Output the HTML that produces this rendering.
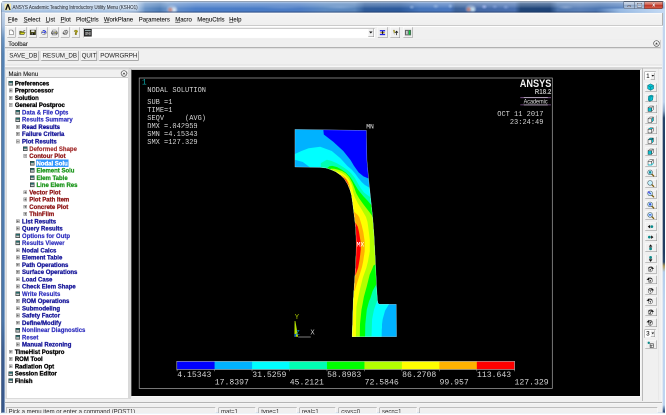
<!DOCTYPE html><html><head><meta charset="utf-8"><title>ANSYS</title><style>
html,body{margin:0;padding:0;background:#fff;overflow:hidden;width:666px;height:415px}
#w{position:absolute;left:0;top:0;width:1332px;height:830px;transform:scale(.5);will-change:transform;transform-origin:0 0;font-family:"Liberation Sans",sans-serif;font-size:12px;color:#000;overflow:hidden}
#w div,#w span.a,#w svg{position:absolute;box-sizing:border-box}
.t{white-space:nowrap;line-height:1;-webkit-text-stroke:.18px currentColor}
.m{font-family:"Liberation Mono",monospace;white-space:nowrap;line-height:1;color:#e8e8e8}
u{text-decoration:underline;text-underline-offset:1px}
.btn{background:#f0f0f0;border:1px solid;border-color:#fff #7a7a7a #7a7a7a #fff;box-shadow:0 0 0 1px #d9d9d9}
.tb{background:#f0f0f0;border:1px solid;border-color:#fff #8a8a8a #8a8a8a #fff}
.sunk{border:1px solid;border-color:#8c8c8c #fff #fff #8c8c8c;background:#f0f0f0}
.row{white-space:nowrap;line-height:1;font-weight:bold;font-size:12px;-webkit-text-stroke:.5px currentColor}
.c0{color:#000}.c1{color:#17179a}.c2{color:#8e1414}.c3{color:#1c961c}.c1d{color:#2b2bbe;-webkit-text-stroke-width:.3px}.c2d{color:#a22c2c;-webkit-text-stroke-width:.3px}
</style></head><body><div id="w">
<div style="left:2.4px;top:2.4px;width:1327.8px;height:837.6px;background:#bdd2ea;border:1px solid #5e6b7c;border-radius:6px 6px 0 0"></div>
<div style="left:3.2px;top:4px;width:5.9px;height:821px;background:linear-gradient(to right,rgba(255,255,255,.35) 0,rgba(255,255,255,0) 1.5px,rgba(255,255,255,0) 5.4px,rgba(255,255,255,.3) 100%),linear-gradient(to bottom,#c3d6ec 0,#bccfe6 26px,#a9c0dd 48px,#6a94c2 72px,#5482b4 104px,#4f7cae 400px,#4a75a8 640px,#3c5d90 700px,#38578a 100%)"></div>
<div style="left:1324.6px;top:4px;width:5px;height:821px;background:linear-gradient(to right,rgba(255,255,255,.5) 0,rgba(255,255,255,0) 1.6px),linear-gradient(to bottom,#c3d6ec 0,#c2d6f0 26px,#bfd3ee 200px,#8aa4c6 218px,#24426a 232px,#1f3a5f 300px,#1f3a5f 500px,#2a4669 520px,#b09a5a 528px,#b4cdec 540px,#bdd4f0 600px,#bdd4f0 806px,#5a7aa8 814px,#2f4f7c 819px,#2f4f7c 100%)"></div>
<div style="left:3.4px;top:3.4px;width:1325.8px;height:22.6px;background:linear-gradient(to bottom,rgba(222,233,246,.95) 0,rgba(222,233,246,.62) 1.6px,rgba(214,228,244,.36) 4px,rgba(214,228,244,.22) 9px,rgba(214,228,244,0) 14px,rgba(0,0,0,0) 19px,rgba(30,50,90,.55) 21.2px,rgba(40,60,100,.7) 22px,rgba(255,255,255,.9) 22.6px),radial-gradient(ellipse 6.4px 6.8px at 337.6px 16.6px,rgba(214,120,100,.75),rgba(255,255,255,0) 100%),radial-gradient(ellipse 6.8px 7.2px at 345.6px 16.6px,rgba(222,236,246,.9),rgba(255,255,255,0) 100%),radial-gradient(ellipse 13px 10px at 341.6px 15.6px,rgba(225,228,240,.75),rgba(255,255,255,0) 100%),radial-gradient(ellipse 6.4px 6.8px at 934.2px 15.8px,rgba(214,120,100,.75),rgba(255,255,255,0) 100%),radial-gradient(ellipse 6.8px 7.2px at 943px 15.8px,rgba(200,232,246,.9),rgba(255,255,255,0) 100%),radial-gradient(ellipse 13px 10px at 938.6px 14.6px,rgba(225,228,240,.75),rgba(255,255,255,0) 100%),radial-gradient(ellipse 6.4px 5.2px at 965.6px 10.6px,rgba(160,180,240,.85),rgba(255,255,255,0) 100%),radial-gradient(ellipse 6.4px 4.8px at 986.6px 10.6px,rgba(120,150,215,.7),rgba(255,255,255,0) 100%),radial-gradient(ellipse 6.4px 5.2px at 1008.6px 11.4px,rgba(130,160,220,.7),rgba(255,255,255,0) 100%),radial-gradient(ellipse 6px 4.8px at 820.6px 11.4px,rgba(140,175,225,.7),rgba(255,255,255,0) 100%),radial-gradient(ellipse 6.8px 5.2px at 868.6px 9.8px,rgba(140,175,225,.7),rgba(255,255,255,0) 100%),radial-gradient(ellipse 5.2px 5.2px at 897.6px 9.4px,rgba(150,185,230,.7),rgba(255,255,255,0) 100%),radial-gradient(ellipse 16px 4.8px at 1128.6px 11.6px,rgba(150,175,215,.6),rgba(255,255,255,0) 100%),radial-gradient(ellipse 32px 5.2px at 676.6px 11.6px,rgba(140,175,220,.5),rgba(255,255,255,0) 100%),radial-gradient(ellipse 40px 4.4px at 560.6px 12.6px,rgba(110,150,210,.45),rgba(255,255,255,0) 100%),linear-gradient(to right,#c6d8ee -3.4px,#c2d5ec 246.6px,#b4cbe6 268.6px,#6a94c8 286.6px,#4f7eb8 316.6px,#6f98cc 332.6px,#6590cc 348.6px,#4c7ec8 388.6px,#4a7cc6 516.6px,#4c7cc4 596.6px,#5c8ac2 646.6px,#5a86bc 706.6px,#305c9a 726.6px,#2c5a9c 796.6px,#4676bc 836.6px,#4a78c0 896.6px,#3c6299 908.6px,#456aa8 956.6px,#4a70b0 1026.6px,#214678 1038.6px,#1f4478 1096.6px,#5078b0 1112.6px,#5a80b8 1156.6px,#4a74b0 1196.6px,#5a84c0 1242.6px,#88a8d0 1326.6px);border-radius:5px 5px 0 0"></div>
<div style="left:3.4px;top:3.4px;width:288.6px;height:22px;background:linear-gradient(to bottom,#d6e4f3 0,#c4d7ed 6px,#b0c9e6 14px,#9fbde0 21px,#b8cce4 22px);border-radius:5px 0 0 0;-webkit-mask-image:linear-gradient(to right,#000 0,#000 84%,rgba(0,0,0,0) 100%);mask-image:linear-gradient(to right,#000 0,#000 84%,rgba(0,0,0,0) 100%)"></div>
<svg style="left:8.8px;top:6.6px" width="13.6" height="14.0" viewBox="0 0 14 14"><rect width="14" height="14" fill="#f3e9b0"/><path d="M1.2 13 L5.6 1 H8.4 L12.8 13 H9.6 L7 5.2 L4.4 13Z" fill="#111"/></svg>
<div class="t" style="left:25.2px;top:8.8px;font-size:10.8px;color:#262e3a;opacity:.92;transform:scaleX(.838);transform-origin:0 0;-webkit-text-stroke:.25px #262e3a;text-shadow:0 0 4px #fff,0 0 6px #fff,0 0 9px #fff">ANSYS Academic Teaching Introductory Utility Menu (KSHO1)</div>
<div style="left:1192px;top:17.2px;width:137.2px;height:8.6px;background:linear-gradient(to right,rgba(160,195,235,0) 0,rgba(165,198,236,.85) 36%,rgba(196,218,244,1) 100%)"></div>
<div style="left:1247.4px;top:3px;width:21.4px;height:14.6px;background:linear-gradient(#d4deec,#a9bcd6 45%,#8fa8c8 50%,#b4c6de);border:1px solid #4a5a70;border-radius:0 0 0 4px"></div>
<div style="left:1255px;top:11.2px;width:7px;height:2.8px;background:#f4f4f4;border:1px solid #556"></div>
<div style="left:1268.8px;top:3px;width:20px;height:14.6px;background:linear-gradient(#d4deec,#a9bcd6 45%,#8fa8c8 50%,#b4c6de);border:1px solid #4a5a70;border-left:none"></div>
<div style="left:1274.8px;top:7.2px;width:8.4px;height:6.4px;border:1.6px solid #f4f4f4;outline:1px solid #556"></div>
<div style="left:1288.8px;top:3px;width:36.8px;height:14.6px;background:linear-gradient(#e3a79a,#d0594a 45%,#c0372a 50%,#d6604a);border:1px solid #5a3030;border-left:none;border-radius:0 0 4px 0"></div>
<div class="t" style="left:1304.4px;top:3.8px;font-size:10.5px;font-weight:bold;color:#fff;text-shadow:0 0 2px #522">x</div>
<div style="left:9.6px;top:26px;width:1315px;height:799.2px;background:#f0f0f0"></div>
<div style="left:9.6px;top:26px;width:1315px;height:24.6px;background:linear-gradient(#fdfdfd 0,#f3f3f3 3px,#efefef 100%);border-bottom:1px solid #a6a6a6;border-right:1px solid #b0b0b0"></div>
<div class="t" style="left:16px;top:32.8px;font-size:12px;color:#101010"><u>F</u>ile</div>
<div class="t" style="left:47.2px;top:32.8px;font-size:12px;color:#101010"><u>S</u>elect</div>
<div class="t" style="left:91.4px;top:32.8px;font-size:12px;color:#101010"><u>L</u>ist</div>
<div class="t" style="left:121px;top:32.8px;font-size:12px;color:#101010"><u>P</u>lot</div>
<div class="t" style="left:152px;top:32.8px;font-size:12px;color:#101010">Plot<u>C</u>trls</div>
<div class="t" style="left:207.8px;top:32.8px;font-size:12px;color:#101010"><u>W</u>orkPlane</div>
<div class="t" style="left:277.6px;top:32.8px;font-size:12px;color:#101010">Pa<u>r</u>ameters</div>
<div class="t" style="left:350.4px;top:32.8px;font-size:12px;color:#101010"><u>M</u>acro</div>
<div class="t" style="left:394.4px;top:32.8px;font-size:12px;color:#101010">Me<u>n</u>uCtrls</div>
<div class="t" style="left:458.2px;top:32.8px;font-size:12px;color:#101010"><u>H</u>elp</div>
<div style="left:9.6px;top:51.6px;width:1315px;height:1px;background:#fff"></div>
<div class="tb" style="left:13.8px;top:54.4px;width:17.4px;height:20.8px;"></div>
<svg style="left:16.3px;top:59.2px" width="13.4" height="11.6" viewBox="0 0 16 16" preserveAspectRatio="none"><path d="M3.5 1.5H10L13 4.5V14.5H3.5Z" fill="#fff" stroke="#444" stroke-width="1.1"/><path d="M10 1.5V4.5H13" fill="none" stroke="#444" stroke-width="1"/></svg>
<div class="tb" style="left:35.3px;top:54.4px;width:17.4px;height:20.8px;"></div>
<svg style="left:37.8px;top:59.2px" width="13.4" height="11.6" viewBox="0 0 16 16" preserveAspectRatio="none"><path d="M1.5 13.5V4.5H5.5L7 6H12V13.5Z" fill="#8a8a00" stroke="#222" stroke-width="1"/><path d="M1.5 13.5L4.5 8H15L12 13.5Z" fill="#d8d820" stroke="#222" stroke-width="1"/><path d="M10 3.5c1.5-2 3.5-1.5 4 .5M14 4l.6-1.8M14 4l-1.8-.4" stroke="#222" fill="none"/></svg>
<div class="tb" style="left:56.8px;top:54.4px;width:17.4px;height:20.8px;"></div>
<svg style="left:59.3px;top:59.2px" width="13.4" height="11.6" viewBox="0 0 16 16" preserveAspectRatio="none"><rect x="1.5" y="1.5" width="13" height="13" fill="#4a4a10" stroke="#111"/><rect x="4" y="2" width="8" height="5" fill="#e8e8e8"/><rect x="4.5" y="9.5" width="7" height="5" fill="#1a1a1a"/><rect x="5.5" y="10.5" width="2" height="3" fill="#ddd"/></svg>
<div class="tb" style="left:78.3px;top:54.4px;width:17.4px;height:20.8px;"></div>
<svg style="left:80.8px;top:59.2px" width="13.4" height="11.6" viewBox="0 0 16 16" preserveAspectRatio="none"><ellipse cx="8" cy="8.5" rx="6" ry="5.5" fill="#b8bcc8" stroke="#444"/><path d="M6 3C12 2 14 7 9 9C7 10 5 9 4 8" fill="none" stroke="#2030e8" stroke-width="2.4"/><ellipse cx="6" cy="11" rx="2.5" ry="1.8" fill="#f4f4f4"/></svg>
<div class="tb" style="left:99.8px;top:54.4px;width:17.4px;height:20.8px;"></div>
<svg style="left:102.3px;top:59.2px" width="13.4" height="11.6" viewBox="0 0 16 16" preserveAspectRatio="none"><path d="M4 6.5V1.5H11.5L12.5 3V6.5" fill="#fff" stroke="#333" stroke-width="1"/><path d="M1 6.5H15V12.5H1Z" fill="#8c8c8c" stroke="#222" stroke-width="1"/><path d="M3 10.5H13V15H3Z" fill="#e4e4e4" stroke="#222" stroke-width="1"/><rect x="10" y="8" width="2.6" height="1.6" fill="#d8d000"/><path d="M2 8H8" stroke="#d0d0d0" stroke-width="1"/></svg>
<div class="tb" style="left:121.3px;top:54.4px;width:17.4px;height:20.8px;"></div>
<svg style="left:123.8px;top:59.2px" width="13.4" height="11.6" viewBox="0 0 16 16" preserveAspectRatio="none"><path d="M1.5 10L6 2.5L10.5 1.5L14.5 5L11 13.5L5 14.5Z" fill="#b4b4b4" stroke="#444" stroke-width="1"/><path d="M6 5L10 3.5L12 6L9 10L5.5 10.5Z" fill="#f0f0f0"/><circle cx="4.6" cy="10.6" r="1.5" fill="#222"/><circle cx="8.6" cy="7" r="1.4" fill="#222"/><circle cx="12" cy="9.6" r="1.3" fill="#333"/><circle cx="10.4" cy="3.4" r="1.1" fill="#555"/></svg>
<div class="tb" style="left:142.8px;top:54.4px;width:17.4px;height:20.8px;"></div>
<svg style="left:145.3px;top:59.2px" width="13.4" height="11.6" viewBox="0 0 16 16" preserveAspectRatio="none"><path d="M3.8 5.6C3.8 0.4 12.4 0.4 12.4 5.2C12.4 7.8 9.6 7.8 9.6 10.4H6.2C6.2 6.8 8.8 6.8 8.8 5.2C8.8 3.8 7.2 3.8 7.2 5.6Z" fill="#b0a400" stroke="#5a5000" stroke-width=".8"/><rect x="6.2" y="11.4" width="3.4" height="3.2" fill="#b0a400" stroke="#5a5000" stroke-width=".8"/></svg>
<div style="left:166.4px;top:55.6px;width:583.2px;height:20.8px;border:1px solid;border-color:#9a9a9a #fdfdfd #fdfdfd #9a9a9a;background:#fff"></div>
<div style="left:167.6px;top:56.6px;width:15.8px;height:17.2px;background:#f0f0f0"></div>
<svg style="left:168.2px;top:58.2px" width="15.4" height="15.2" viewBox="0 0 15 16" preserveAspectRatio="none"><rect x=".5" y=".5" width="14" height="15" fill="#2e2e2e" stroke="#111"/><rect x="2" y="2" width="11" height="2.2" fill="#9aa"/><path d="M2.5 7H8M2.5 9.5H11M2.5 12H7" stroke="#ccc" stroke-width="1.2"/><rect x="9" y="6" width="4" height="7" fill="#888"/></svg>
<div class="tb" style="left:736.4px;top:57px;width:11.2px;height:17.4px;"></div>
<svg style="left:738.4px;top:62.4px" width="7.2" height="6" viewBox="0 0 7 6"><path d="M0 1H7L3.5 5Z" fill="#111"/></svg>
<div class="tb" style="left:755px;top:54px;width:19.8px;height:21.6px;"></div>
<svg style="left:758.4px;top:58.6px" width="14" height="12.4" viewBox="0 0 16 16" preserveAspectRatio="none"><rect x="2" y="1.5" width="12" height="3.4" fill="#2424e0"/><rect x="2" y="11.2" width="12" height="3.4" fill="#2424e0"/><rect x="6.6" y="4.5" width="2.8" height="7" fill="#111"/><rect x="3" y="6.5" width="10" height="3" fill="#b89a30"/><rect x="6.6" y="6.5" width="2.8" height="3" fill="#111"/></svg>
<div class="tb" style="left:780.4px;top:54px;width:19.8px;height:21.6px;"></div>
<svg style="left:783.8px;top:58.6px" width="14" height="12.4" viewBox="0 0 16 16" preserveAspectRatio="none"><path d="M2.6 1.6L5.8 1.6L7.2 8L4.6 9Z" fill="#dcc828" stroke="#665" stroke-width=".8"/><path d="M10.6 14.5V5M7.6 8.4L10.6 4.4L13.6 8.4" fill="none" stroke="#111" stroke-width="1.7"/><path d="M4 9l2 4" stroke="#887" /></svg>
<div class="tb" style="left:805.6px;top:54px;width:19.8px;height:21.6px;"></div>
<svg style="left:809px;top:58.6px" width="14" height="12.4" viewBox="0 0 16 16" preserveAspectRatio="none"><rect x="1.5" y="1.5" width="13" height="13" fill="#9a9a9a" stroke="#444"/><rect x="3" y="3" width="5" height="10" fill="#c8ccd0" stroke="#555"/><rect x="10" y="2.5" width="3.4" height="11" fill="#10c840" stroke="#0a6a2a" stroke-width=".6"/></svg>
<div style="left:9.6px;top:77.8px;width:1314.4px;height:1.2px;background:#ececec"></div>
<div class="t" style="left:16.4px;top:81.8px;font-size:12px;color:#101010">Toolbar</div>
<div style="left:9.6px;top:94.4px;width:1311.6px;height:2.8px;background:linear-gradient(#c6c6c6,#a8a8a8 50%,#e4e4e4)"></div>
<div style="left:1319.6px;top:80px;width:1.4px;height:16.8px;background:#b0b0b0"></div>
<svg style="left:1306.2px;top:80.4px" width="14" height="14" viewBox="0 0 14 14"><circle cx="7" cy="7" r="5.7" fill="#f6f6f6" stroke="#505050" stroke-width="1.3"/><path d="M4.2 9.6L7 5L9.8 9.6" fill="none" stroke="#7a7a7a" stroke-width="1"/><circle cx="7" cy="7.5" r="1.5" fill="#3a3a3a"/></svg>
<div class="btn" style="left:14.8px;top:101.6px;width:63.6px;height:19.8px;"></div>
<div class="t" style="left:14.8px;top:105px;width:63.6px;text-align:center;font-size:12.4px;color:#1c1c1c;-webkit-text-stroke:0">SAVE_DB</div>
<div class="btn" style="left:82.4px;top:101.6px;width:74.4px;height:19.8px;"></div>
<div class="t" style="left:82.4px;top:105px;width:74.4px;text-align:center;font-size:12.4px;color:#1c1c1c;-webkit-text-stroke:0">RESUM_DB</div>
<div class="btn" style="left:161.6px;top:101.6px;width:32.8px;height:19.8px;"></div>
<div class="t" style="left:161.6px;top:105px;width:32.8px;text-align:center;font-size:12.4px;color:#1c1c1c;-webkit-text-stroke:0">QUIT</div>
<div class="btn" style="left:198.4px;top:101.6px;width:78.4px;height:19.8px;"></div>
<div class="t" style="left:198.4px;top:105px;width:78.4px;text-align:center;font-size:12.4px;color:#1c1c1c;-webkit-text-stroke:0">POWRGRPH</div>
<div style="left:9.6px;top:129.2px;width:1314.4px;height:1.4px;background:#e2e2e2"></div>
<div style="left:9.6px;top:130.6px;width:1314.4px;height:4.2px;background:linear-gradient(#f3f3f3,#fbfbfb 50%,#efefef)"></div>
<div style="left:9.6px;top:134.8px;width:1314.4px;height:2.6px;background:linear-gradient(#c9c9c9,#b2b2b2 50%,#c4c4c4)"></div>
<div style="left:10.6px;top:138px;width:246.2px;height:660px;border:1px solid #d4d4d4;border-right-color:#c2c2c2;background:#f0f0f0"></div>
<div class="t" style="left:17px;top:142.2px;font-size:12px;color:#101010">Main Menu</div>
<svg style="left:241.4px;top:140px" width="14" height="14" viewBox="0 0 14 14"><circle cx="7" cy="7" r="5.7" fill="#f6f6f6" stroke="#505050" stroke-width="1.3"/><path d="M4.2 9.6L7 5L9.8 9.6" fill="none" stroke="#7a7a7a" stroke-width="1"/><circle cx="7" cy="7.5" r="1.5" fill="#3a3a3a"/></svg>
<div style="left:12.4px;top:155.4px;width:243.6px;height:642px;background:#fff;border:1px solid;border-color:#a8a8a8 #e0e0e0 #e0e0e0 #b8b8b8"></div>
<div style="left:259.2px;top:137px;width:1.6px;height:661px;background:#c4c4c4"></div>
<svg style="left:16.9px;top:162.2px" width="9.2" height="9.2" viewBox="0 0 10 9.4" preserveAspectRatio="none"><rect x=".6" y=".6" width="8.8" height="8.2" fill="#7f8787" stroke="#2e3636" stroke-width="1.2"/><rect x="1.2" y="1.2" width="7.6" height="2.5" fill="#1d6c6c"/><rect x="2" y="5" width="6" height="1.7" fill="#e2e4e4"/></svg>
<div class="row c0" style="left:29.7px;top:160.9px">Preferences</div>
<svg style="left:17.8px;top:177.41px" width="7.4" height="7.6" viewBox="0 0 9 9" preserveAspectRatio="none"><rect x=".6" y=".6" width="7.8" height="7.8" fill="#d4d4d4" stroke="#8a8a8a" stroke-width="1.3"/><path d="M2.2 4.5H6.8M4.5 2.2V6.8" stroke="#3a3a3a" stroke-width="1.2"/></svg>
<div class="row c0" style="left:29.7px;top:175.41px">Preprocessor</div>
<svg style="left:17.8px;top:191.92px" width="7.4" height="7.6" viewBox="0 0 9 9" preserveAspectRatio="none"><rect x=".6" y=".6" width="7.8" height="7.8" fill="#d4d4d4" stroke="#8a8a8a" stroke-width="1.3"/><path d="M2.2 4.5H6.8M4.5 2.2V6.8" stroke="#3a3a3a" stroke-width="1.2"/></svg>
<div class="row c0" style="left:29.7px;top:189.92px">Solution</div>
<svg style="left:17.8px;top:206.44px" width="7.4" height="7.6" viewBox="0 0 9 9" preserveAspectRatio="none"><rect x=".6" y=".6" width="7.8" height="7.8" fill="#d4d4d4" stroke="#8a8a8a" stroke-width="1.3"/><path d="M2.2 4.5H6.8" stroke="#3a3a3a" stroke-width="1.2"/></svg>
<div class="row c0" style="left:29.7px;top:204.44px">General Postproc</div>
<svg style="left:31.3px;top:220.25px" width="9.2" height="9.2" viewBox="0 0 10 9.4" preserveAspectRatio="none"><rect x=".6" y=".6" width="8.8" height="8.2" fill="#7f8787" stroke="#2e3636" stroke-width="1.2"/><rect x="1.2" y="1.2" width="7.6" height="2.5" fill="#1d6c6c"/><rect x="2" y="5" width="6" height="1.7" fill="#e2e4e4"/></svg>
<div class="row c1 c1d" style="left:44.1px;top:218.95px">Data &amp; File Opts</div>
<svg style="left:31.3px;top:234.76px" width="9.2" height="9.2" viewBox="0 0 10 9.4" preserveAspectRatio="none"><rect x=".6" y=".6" width="8.8" height="8.2" fill="#7f8787" stroke="#2e3636" stroke-width="1.2"/><rect x="1.2" y="1.2" width="7.6" height="2.5" fill="#1d6c6c"/><rect x="2" y="5" width="6" height="1.7" fill="#e2e4e4"/></svg>
<div class="row c1 c1d" style="left:44.1px;top:233.46px">Results Summary</div>
<svg style="left:32.2px;top:249.97px" width="7.4" height="7.6" viewBox="0 0 9 9" preserveAspectRatio="none"><rect x=".6" y=".6" width="7.8" height="7.8" fill="#d4d4d4" stroke="#8a8a8a" stroke-width="1.3"/><path d="M2.2 4.5H6.8M4.5 2.2V6.8" stroke="#3a3a3a" stroke-width="1.2"/></svg>
<div class="row c1" style="left:44.1px;top:247.97px">Read Results</div>
<svg style="left:32.2px;top:264.48px" width="7.4" height="7.6" viewBox="0 0 9 9" preserveAspectRatio="none"><rect x=".6" y=".6" width="7.8" height="7.8" fill="#d4d4d4" stroke="#8a8a8a" stroke-width="1.3"/><path d="M2.2 4.5H6.8M4.5 2.2V6.8" stroke="#3a3a3a" stroke-width="1.2"/></svg>
<div class="row c1" style="left:44.1px;top:262.48px">Failure Criteria</div>
<svg style="left:32.2px;top:279px" width="7.4" height="7.6" viewBox="0 0 9 9" preserveAspectRatio="none"><rect x=".6" y=".6" width="7.8" height="7.8" fill="#d4d4d4" stroke="#8a8a8a" stroke-width="1.3"/><path d="M2.2 4.5H6.8" stroke="#3a3a3a" stroke-width="1.2"/></svg>
<div class="row c1" style="left:44.1px;top:277px">Plot Results</div>
<svg style="left:45.7px;top:292.81px" width="9.2" height="9.2" viewBox="0 0 10 9.4" preserveAspectRatio="none"><rect x=".6" y=".6" width="8.8" height="8.2" fill="#7f8787" stroke="#2e3636" stroke-width="1.2"/><rect x="1.2" y="1.2" width="7.6" height="2.5" fill="#1d6c6c"/><rect x="2" y="5" width="6" height="1.7" fill="#e2e4e4"/></svg>
<div class="row c2 c2d" style="left:58.5px;top:291.51px">Deformed Shape</div>
<svg style="left:46.6px;top:308.02px" width="7.4" height="7.6" viewBox="0 0 9 9" preserveAspectRatio="none"><rect x=".6" y=".6" width="7.8" height="7.8" fill="#d4d4d4" stroke="#8a8a8a" stroke-width="1.3"/><path d="M2.2 4.5H6.8" stroke="#3a3a3a" stroke-width="1.2"/></svg>
<div class="row c2" style="left:58.5px;top:306.02px">Contour Plot</div>
<svg style="left:60.1px;top:321.83px" width="9.2" height="9.2" viewBox="0 0 10 9.4" preserveAspectRatio="none"><rect x=".6" y=".6" width="8.8" height="8.2" fill="#7f8787" stroke="#2e3636" stroke-width="1.2"/><rect x="1.2" y="1.2" width="7.6" height="2.5" fill="#1d6c6c"/><rect x="2" y="5" width="6" height="1.7" fill="#e2e4e4"/></svg>
<div style="left:72.2px;top:318.93px;width:65.2px;height:14.6px;background:#3397fd"></div>
<div class="row c3" style="left:72.9px;top:320.53px;color:#fff">Nodal Solu</div>
<svg style="left:60.1px;top:336.34px" width="9.2" height="9.2" viewBox="0 0 10 9.4" preserveAspectRatio="none"><rect x=".6" y=".6" width="8.8" height="8.2" fill="#7f8787" stroke="#2e3636" stroke-width="1.2"/><rect x="1.2" y="1.2" width="7.6" height="2.5" fill="#1d6c6c"/><rect x="2" y="5" width="6" height="1.7" fill="#e2e4e4"/></svg>
<div class="row c3" style="left:72.9px;top:335.04px">Element Solu</div>
<svg style="left:60.1px;top:350.86px" width="9.2" height="9.2" viewBox="0 0 10 9.4" preserveAspectRatio="none"><rect x=".6" y=".6" width="8.8" height="8.2" fill="#7f8787" stroke="#2e3636" stroke-width="1.2"/><rect x="1.2" y="1.2" width="7.6" height="2.5" fill="#1d6c6c"/><rect x="2" y="5" width="6" height="1.7" fill="#e2e4e4"/></svg>
<div class="row c3" style="left:72.9px;top:349.56px">Elem Table</div>
<svg style="left:60.1px;top:365.37px" width="9.2" height="9.2" viewBox="0 0 10 9.4" preserveAspectRatio="none"><rect x=".6" y=".6" width="8.8" height="8.2" fill="#7f8787" stroke="#2e3636" stroke-width="1.2"/><rect x="1.2" y="1.2" width="7.6" height="2.5" fill="#1d6c6c"/><rect x="2" y="5" width="6" height="1.7" fill="#e2e4e4"/></svg>
<div class="row c3" style="left:72.9px;top:364.07px">Line Elem Res</div>
<svg style="left:46.6px;top:380.58px" width="7.4" height="7.6" viewBox="0 0 9 9" preserveAspectRatio="none"><rect x=".6" y=".6" width="7.8" height="7.8" fill="#d4d4d4" stroke="#8a8a8a" stroke-width="1.3"/><path d="M2.2 4.5H6.8M4.5 2.2V6.8" stroke="#3a3a3a" stroke-width="1.2"/></svg>
<div class="row c2" style="left:58.5px;top:378.58px">Vector Plot</div>
<svg style="left:46.6px;top:395.09px" width="7.4" height="7.6" viewBox="0 0 9 9" preserveAspectRatio="none"><rect x=".6" y=".6" width="7.8" height="7.8" fill="#d4d4d4" stroke="#8a8a8a" stroke-width="1.3"/><path d="M2.2 4.5H6.8M4.5 2.2V6.8" stroke="#3a3a3a" stroke-width="1.2"/></svg>
<div class="row c2" style="left:58.5px;top:393.09px">Plot Path Item</div>
<svg style="left:46.6px;top:409.6px" width="7.4" height="7.6" viewBox="0 0 9 9" preserveAspectRatio="none"><rect x=".6" y=".6" width="7.8" height="7.8" fill="#d4d4d4" stroke="#8a8a8a" stroke-width="1.3"/><path d="M2.2 4.5H6.8M4.5 2.2V6.8" stroke="#3a3a3a" stroke-width="1.2"/></svg>
<div class="row c2" style="left:58.5px;top:407.6px">Concrete Plot</div>
<svg style="left:46.6px;top:424.12px" width="7.4" height="7.6" viewBox="0 0 9 9" preserveAspectRatio="none"><rect x=".6" y=".6" width="7.8" height="7.8" fill="#d4d4d4" stroke="#8a8a8a" stroke-width="1.3"/><path d="M2.2 4.5H6.8M4.5 2.2V6.8" stroke="#3a3a3a" stroke-width="1.2"/></svg>
<div class="row c2" style="left:58.5px;top:422.12px">ThinFilm</div>
<svg style="left:32.2px;top:438.63px" width="7.4" height="7.6" viewBox="0 0 9 9" preserveAspectRatio="none"><rect x=".6" y=".6" width="7.8" height="7.8" fill="#d4d4d4" stroke="#8a8a8a" stroke-width="1.3"/><path d="M2.2 4.5H6.8M4.5 2.2V6.8" stroke="#3a3a3a" stroke-width="1.2"/></svg>
<div class="row c1" style="left:44.1px;top:436.63px">List Results</div>
<svg style="left:32.2px;top:453.14px" width="7.4" height="7.6" viewBox="0 0 9 9" preserveAspectRatio="none"><rect x=".6" y=".6" width="7.8" height="7.8" fill="#d4d4d4" stroke="#8a8a8a" stroke-width="1.3"/><path d="M2.2 4.5H6.8M4.5 2.2V6.8" stroke="#3a3a3a" stroke-width="1.2"/></svg>
<div class="row c1" style="left:44.1px;top:451.14px">Query Results</div>
<svg style="left:31.3px;top:466.95px" width="9.2" height="9.2" viewBox="0 0 10 9.4" preserveAspectRatio="none"><rect x=".6" y=".6" width="8.8" height="8.2" fill="#7f8787" stroke="#2e3636" stroke-width="1.2"/><rect x="1.2" y="1.2" width="7.6" height="2.5" fill="#1d6c6c"/><rect x="2" y="5" width="6" height="1.7" fill="#e2e4e4"/></svg>
<div class="row c1 c1d" style="left:44.1px;top:465.65px">Options for Outp</div>
<svg style="left:31.3px;top:481.46px" width="9.2" height="9.2" viewBox="0 0 10 9.4" preserveAspectRatio="none"><rect x=".6" y=".6" width="8.8" height="8.2" fill="#7f8787" stroke="#2e3636" stroke-width="1.2"/><rect x="1.2" y="1.2" width="7.6" height="2.5" fill="#1d6c6c"/><rect x="2" y="5" width="6" height="1.7" fill="#e2e4e4"/></svg>
<div class="row c1 c1d" style="left:44.1px;top:480.16px">Results Viewer</div>
<svg style="left:32.2px;top:496.68px" width="7.4" height="7.6" viewBox="0 0 9 9" preserveAspectRatio="none"><rect x=".6" y=".6" width="7.8" height="7.8" fill="#d4d4d4" stroke="#8a8a8a" stroke-width="1.3"/><path d="M2.2 4.5H6.8M4.5 2.2V6.8" stroke="#3a3a3a" stroke-width="1.2"/></svg>
<div class="row c1" style="left:44.1px;top:494.68px">Nodal Calcs</div>
<svg style="left:32.2px;top:511.19px" width="7.4" height="7.6" viewBox="0 0 9 9" preserveAspectRatio="none"><rect x=".6" y=".6" width="7.8" height="7.8" fill="#d4d4d4" stroke="#8a8a8a" stroke-width="1.3"/><path d="M2.2 4.5H6.8M4.5 2.2V6.8" stroke="#3a3a3a" stroke-width="1.2"/></svg>
<div class="row c1" style="left:44.1px;top:509.19px">Element Table</div>
<svg style="left:32.2px;top:525.7px" width="7.4" height="7.6" viewBox="0 0 9 9" preserveAspectRatio="none"><rect x=".6" y=".6" width="7.8" height="7.8" fill="#d4d4d4" stroke="#8a8a8a" stroke-width="1.3"/><path d="M2.2 4.5H6.8M4.5 2.2V6.8" stroke="#3a3a3a" stroke-width="1.2"/></svg>
<div class="row c1" style="left:44.1px;top:523.7px">Path Operations</div>
<svg style="left:32.2px;top:540.21px" width="7.4" height="7.6" viewBox="0 0 9 9" preserveAspectRatio="none"><rect x=".6" y=".6" width="7.8" height="7.8" fill="#d4d4d4" stroke="#8a8a8a" stroke-width="1.3"/><path d="M2.2 4.5H6.8M4.5 2.2V6.8" stroke="#3a3a3a" stroke-width="1.2"/></svg>
<div class="row c1" style="left:44.1px;top:538.21px">Surface Operations</div>
<svg style="left:32.2px;top:554.72px" width="7.4" height="7.6" viewBox="0 0 9 9" preserveAspectRatio="none"><rect x=".6" y=".6" width="7.8" height="7.8" fill="#d4d4d4" stroke="#8a8a8a" stroke-width="1.3"/><path d="M2.2 4.5H6.8M4.5 2.2V6.8" stroke="#3a3a3a" stroke-width="1.2"/></svg>
<div class="row c1" style="left:44.1px;top:552.72px">Load Case</div>
<svg style="left:32.2px;top:569.24px" width="7.4" height="7.6" viewBox="0 0 9 9" preserveAspectRatio="none"><rect x=".6" y=".6" width="7.8" height="7.8" fill="#d4d4d4" stroke="#8a8a8a" stroke-width="1.3"/><path d="M2.2 4.5H6.8M4.5 2.2V6.8" stroke="#3a3a3a" stroke-width="1.2"/></svg>
<div class="row c1" style="left:44.1px;top:567.24px">Check Elem Shape</div>
<svg style="left:31.3px;top:583.05px" width="9.2" height="9.2" viewBox="0 0 10 9.4" preserveAspectRatio="none"><rect x=".6" y=".6" width="8.8" height="8.2" fill="#7f8787" stroke="#2e3636" stroke-width="1.2"/><rect x="1.2" y="1.2" width="7.6" height="2.5" fill="#1d6c6c"/><rect x="2" y="5" width="6" height="1.7" fill="#e2e4e4"/></svg>
<div class="row c1 c1d" style="left:44.1px;top:581.75px">Write Results</div>
<svg style="left:32.2px;top:598.26px" width="7.4" height="7.6" viewBox="0 0 9 9" preserveAspectRatio="none"><rect x=".6" y=".6" width="7.8" height="7.8" fill="#d4d4d4" stroke="#8a8a8a" stroke-width="1.3"/><path d="M2.2 4.5H6.8M4.5 2.2V6.8" stroke="#3a3a3a" stroke-width="1.2"/></svg>
<div class="row c1" style="left:44.1px;top:596.26px">ROM Operations</div>
<svg style="left:32.2px;top:612.77px" width="7.4" height="7.6" viewBox="0 0 9 9" preserveAspectRatio="none"><rect x=".6" y=".6" width="7.8" height="7.8" fill="#d4d4d4" stroke="#8a8a8a" stroke-width="1.3"/><path d="M2.2 4.5H6.8M4.5 2.2V6.8" stroke="#3a3a3a" stroke-width="1.2"/></svg>
<div class="row c1" style="left:44.1px;top:610.77px">Submodeling</div>
<svg style="left:32.2px;top:627.28px" width="7.4" height="7.6" viewBox="0 0 9 9" preserveAspectRatio="none"><rect x=".6" y=".6" width="7.8" height="7.8" fill="#d4d4d4" stroke="#8a8a8a" stroke-width="1.3"/><path d="M2.2 4.5H6.8M4.5 2.2V6.8" stroke="#3a3a3a" stroke-width="1.2"/></svg>
<div class="row c1" style="left:44.1px;top:625.28px">Safety Factor</div>
<svg style="left:32.2px;top:641.8px" width="7.4" height="7.6" viewBox="0 0 9 9" preserveAspectRatio="none"><rect x=".6" y=".6" width="7.8" height="7.8" fill="#d4d4d4" stroke="#8a8a8a" stroke-width="1.3"/><path d="M2.2 4.5H6.8M4.5 2.2V6.8" stroke="#3a3a3a" stroke-width="1.2"/></svg>
<div class="row c1" style="left:44.1px;top:639.8px">Define/Modify</div>
<svg style="left:31.3px;top:655.61px" width="9.2" height="9.2" viewBox="0 0 10 9.4" preserveAspectRatio="none"><rect x=".6" y=".6" width="8.8" height="8.2" fill="#7f8787" stroke="#2e3636" stroke-width="1.2"/><rect x="1.2" y="1.2" width="7.6" height="2.5" fill="#1d6c6c"/><rect x="2" y="5" width="6" height="1.7" fill="#e2e4e4"/></svg>
<div class="row c1 c1d" style="left:44.1px;top:654.31px">Nonlinear Diagnostics</div>
<svg style="left:31.3px;top:670.12px" width="9.2" height="9.2" viewBox="0 0 10 9.4" preserveAspectRatio="none"><rect x=".6" y=".6" width="8.8" height="8.2" fill="#7f8787" stroke="#2e3636" stroke-width="1.2"/><rect x="1.2" y="1.2" width="7.6" height="2.5" fill="#1d6c6c"/><rect x="2" y="5" width="6" height="1.7" fill="#e2e4e4"/></svg>
<div class="row c1 c1d" style="left:44.1px;top:668.82px">Reset</div>
<svg style="left:32.2px;top:685.33px" width="7.4" height="7.6" viewBox="0 0 9 9" preserveAspectRatio="none"><rect x=".6" y=".6" width="7.8" height="7.8" fill="#d4d4d4" stroke="#8a8a8a" stroke-width="1.3"/><path d="M2.2 4.5H6.8M4.5 2.2V6.8" stroke="#3a3a3a" stroke-width="1.2"/></svg>
<div class="row c1" style="left:44.1px;top:683.33px">Manual Rezoning</div>
<svg style="left:17.8px;top:699.84px" width="7.4" height="7.6" viewBox="0 0 9 9" preserveAspectRatio="none"><rect x=".6" y=".6" width="7.8" height="7.8" fill="#d4d4d4" stroke="#8a8a8a" stroke-width="1.3"/><path d="M2.2 4.5H6.8M4.5 2.2V6.8" stroke="#3a3a3a" stroke-width="1.2"/></svg>
<div class="row c0" style="left:29.7px;top:697.84px">TimeHist Postpro</div>
<svg style="left:17.8px;top:714.36px" width="7.4" height="7.6" viewBox="0 0 9 9" preserveAspectRatio="none"><rect x=".6" y=".6" width="7.8" height="7.8" fill="#d4d4d4" stroke="#8a8a8a" stroke-width="1.3"/><path d="M2.2 4.5H6.8M4.5 2.2V6.8" stroke="#3a3a3a" stroke-width="1.2"/></svg>
<div class="row c0" style="left:29.7px;top:712.36px">ROM Tool</div>
<svg style="left:17.8px;top:728.87px" width="7.4" height="7.6" viewBox="0 0 9 9" preserveAspectRatio="none"><rect x=".6" y=".6" width="7.8" height="7.8" fill="#d4d4d4" stroke="#8a8a8a" stroke-width="1.3"/><path d="M2.2 4.5H6.8M4.5 2.2V6.8" stroke="#3a3a3a" stroke-width="1.2"/></svg>
<div class="row c0" style="left:29.7px;top:726.87px">Radiation Opt</div>
<svg style="left:16.9px;top:742.68px" width="9.2" height="9.2" viewBox="0 0 10 9.4" preserveAspectRatio="none"><rect x=".6" y=".6" width="8.8" height="8.2" fill="#7f8787" stroke="#2e3636" stroke-width="1.2"/><rect x="1.2" y="1.2" width="7.6" height="2.5" fill="#1d6c6c"/><rect x="2" y="5" width="6" height="1.7" fill="#e2e4e4"/></svg>
<div class="row c0" style="left:29.7px;top:741.38px">Session Editor</div>
<svg style="left:16.9px;top:757.19px" width="9.2" height="9.2" viewBox="0 0 10 9.4" preserveAspectRatio="none"><rect x=".6" y=".6" width="8.8" height="8.2" fill="#7f8787" stroke="#2e3636" stroke-width="1.2"/><rect x="1.2" y="1.2" width="7.6" height="2.5" fill="#1d6c6c"/><rect x="2" y="5" width="6" height="1.7" fill="#e2e4e4"/></svg>
<div class="row c0" style="left:29.7px;top:755.89px">Finish</div>
<div style="left:9.6px;top:804.4px;width:1314.4px;height:1.6px;background:#b4b4b4"></div>
<div style="left:9.6px;top:806px;width:1314.4px;height:1.2px;background:#fbfbfb"></div>
<div class="sunk" style="left:12px;top:815.2px;width:418.6px;height:20.8px;"></div>
<div class="t" style="left:17.2px;top:817px;font-size:12px;color:#2a2a2a;-webkit-text-stroke:0">Pick a menu item or enter a command (POST1)</div>
<div class="sunk" style="left:436.8px;top:815.2px;width:73.8px;height:20.8px;"></div>
<div class="t" style="left:442px;top:817px;font-size:12px;color:#2a2a2a;-webkit-text-stroke:0">mat=1</div>
<div class="sunk" style="left:517.2px;top:815.2px;width:76.8px;height:20.8px;"></div>
<div class="t" style="left:522.4px;top:817px;font-size:12px;color:#2a2a2a;-webkit-text-stroke:0">type=1</div>
<div class="sunk" style="left:598.6px;top:815.2px;width:72px;height:20.8px;"></div>
<div class="t" style="left:603.8px;top:817px;font-size:12px;color:#2a2a2a;-webkit-text-stroke:0">real=1</div>
<div class="sunk" style="left:677.2px;top:815.2px;width:76.8px;height:20.8px;"></div>
<div class="t" style="left:682.4px;top:817px;font-size:12px;color:#2a2a2a;-webkit-text-stroke:0">csys=0</div>
<div class="sunk" style="left:758.8px;top:815.2px;width:75.2px;height:20.8px;"></div>
<div class="t" style="left:764px;top:817px;font-size:12px;color:#2a2a2a;-webkit-text-stroke:0">secn=1</div>
<div class="sunk" style="left:838.8px;top:815.2px;width:476.2px;height:20.8px;"></div>
<div style="left:261.8px;top:138.4px;width:1019.8px;height:654.8px;background:#f0f0f0;border:1px solid;border-color:#9a9a9a #fff #fff #9a9a9a"></div>
<div style="left:263.4px;top:140px;width:1016.6px;height:651.6px;background:#000"></div>
<svg style="left:263.4px;top:140px" width="1016.6" height="651.6" viewBox="131.7 70.0 508.3 325.8"><defs><clipPath id="cp"><polygon points="295.1,129.4 366.6,130.4 367.1,160 368.9,180 371,200 372.9,218 374.2,235 375,250 376,270 376.8,288 377.6,300 378.2,303.2 379.6,304.3 396.5,304.3 396.8,336.7 352.3,336.7 353.5,300 355.9,265 356.5,245 356,230 355,220 353.1,205 351.7,195 350.2,189.9 347.8,184.1 344.5,178.8 340.6,175 335.8,171.6 330,169.2 326,168 320,167.4 295.1,167"/></clipPath><filter id="bl" x="-5%" y="-5%" width="110%" height="110%"><feGaussianBlur stdDeviation=".18"/></filter></defs><rect x="139.4" y="78.0" width="413.1" height="310.4" fill="none" stroke="#a9a9a9" stroke-width=".7"/><g filter="url(#bl)"><g clip-path="url(#cp)"><rect x="280" y="120" width="130" height="230" fill="#00b2ff"/><polygon points="322.5,120 400,120 400,178.6 368.2,178.3 363.7,176.4 358.9,172.5 354.1,165.8 350.7,160 343.5,151 333.4,141.7 324,134.5" fill="#0000ff"/><polygon points="280,154.6 295.1,154 301.6,151 308.8,148.2 320.4,146.7 332,151 340.6,158.3 347.6,166 351.9,169.6 355.5,173.8 358.5,178 362.1,182.3 365.1,185 368.9,187.2 400,188 400,300 389.2,300 389.2,304.3 385.3,310.6 382.9,319.3 381.6,328.9 381.4,350 300,350 300,200 322,180 310.2,167.4 303,162 295.1,159.8 280,159.5" fill="#00ffff"/><polygon points="321,170 321,163.1 327.1,159.8 331.9,161 337.3,163.4 342.1,166.2 346.9,169.5 351.2,173.1 355.1,178 358.1,183.5 361.1,188.5 364.2,192.5 367.8,195.3 370.8,197.4 400,198 400,300 377.4,300.5 374.2,309.6 372.3,319.3 371.3,350 300,350 300,200" fill="#00ffb2"/><polygon points="325.5,170 326.8,168.5 329.5,166.2 332.5,165.9 337.3,167.1 342.1,169.8 346.3,172.8 350.2,176.7 352.5,180 355.1,184.5 358.1,189.5 360.5,192.5 363.9,196.6 368.1,201 371.4,205 400,205 400,284.6 376.6,284.3 372.8,291 370.4,298.7 369.3,301 367,309.6 365.5,324.1 365,350 300,350 300,200" fill="#00ff00"/><polygon points="329,171 331,168.6 334.5,168.8 338,169.6 342.2,171 346,173.4 349.4,177 352.4,182.5 354.8,188.5 356.3,193 359.1,198 363.9,204.7 368.1,210.1 372,215.2 373,218.6 400,219 400,264.5 375.7,264.3 373.6,265.6 372.6,268.5 369.9,274.6 367,286.2 364.1,296.8 362.8,304 361.7,309.6 360.2,324.1 359.8,350 300,350 300,200" fill="#b2ff00"/><polygon points="332.5,172 333.5,170.9 335.5,170.9 338,171.7 341.6,172.8 345.2,175.2 348.1,178.2 350.6,182 352.4,186.2 353.2,191.5 354.9,197 358.2,203.5 362.2,210 366.2,217 367.7,222 368.4,227 369.2,233 370,239.6 370,251.2 368.1,261.8 366.5,268 363.1,277.5 360.2,289.1 358,299.5 356.6,307 356.2,324 355.9,350 300,350 300,200" fill="#ffff00"/><polygon points="340,212 354.3,211.8 357.9,214.9 359.5,217.4 361.8,224.9 363.5,232 364.9,241.6 364.9,251.2 363.3,261.8 362.2,267 359.3,276.6 356.9,284.3 354.9,291 340,291.5" fill="#ffb200"/><polygon points="338,174.5 342.8,175.6 345.2,177.4 347.4,180 348.9,183 350,186.2 350.5,188.8 344,191" fill="#ffb200"/><polygon points="340,223.2 355.8,223 358,226.8 359.2,232 360.8,241.6 361,249.3 359.9,258.9 358.4,267.5 355.9,274.8 340,275" fill="#ff0000"/><polygon points="340,177 344.4,177.7 346.3,179.6 347.8,182.2 348.7,184.8 344,186.5" fill="#ff3a00"/></g><polygon points="295.1,129.4 366.6,130.4 367.1,160 368.9,180 371,200 372.9,218 374.2,235 375,250 376,270 376.8,288 377.6,300 378.2,303.2 379.6,304.3 396.5,304.3 396.8,336.7 352.3,336.7 353.5,300 355.9,265 356.5,245 356,230 355,220 353.1,205 351.7,195 350.2,189.9 347.8,184.1 344.5,178.8 340.6,175 335.8,171.6 330,169.2 326,168 320,167.4 295.1,167" fill="none" stroke="#fff" stroke-opacity=".55" stroke-width=".45"/></g><g font-family="Liberation Mono, monospace"><text x="142.1" y="84.7" font-size="8" fill="#0ea2a2" xml:space="preserve">1</text><text x="147.5" y="92.1" font-size="7" fill="#d6d6d6" xml:space="preserve">NODAL SOLUTION</text><text x="147.5" y="103.9" font-size="7" fill="#d6d6d6" xml:space="preserve">SUB =1</text><text x="147.5" y="112" font-size="7" fill="#d6d6d6" xml:space="preserve">TIME=1</text><text x="147.5" y="120" font-size="7" fill="#d6d6d6" xml:space="preserve">SEQV     (AVG)</text><text x="147.5" y="128.1" font-size="7" fill="#d6d6d6" xml:space="preserve">DMX =.042959</text><text x="147.5" y="136.2" font-size="7" fill="#d6d6d6" xml:space="preserve">SMN =4.15343</text><text x="147.5" y="144.2" font-size="7" fill="#d6d6d6" xml:space="preserve">SMX =127.329</text><text x="543.6" y="115.9" font-size="7" fill="#d6d6d6" text-anchor="end" xml:space="preserve">OCT 11 2017</text><text x="543.6" y="124.1" font-size="7" fill="#d6d6d6" text-anchor="end" xml:space="preserve">23:24:49</text><text x="366.4" y="128.6" font-size="6.4" fill="#e8e8e8" xml:space="preserve">MN</text><text x="356.8" y="246.6" font-size="6.4" fill="#ffffff" xml:space="preserve">MX</text><rect x="177.3" y="361.6" width="37.6667" height="7.7" fill="#0000ff"/><rect x="214.767" y="361.6" width="37.6667" height="7.7" fill="#00b2ff"/><rect x="252.233" y="361.6" width="37.6667" height="7.7" fill="#00ffff"/><rect x="289.7" y="361.6" width="37.6667" height="7.7" fill="#00ffb2"/><rect x="327.167" y="361.6" width="37.6667" height="7.7" fill="#00ff00"/><rect x="364.633" y="361.6" width="37.6667" height="7.7" fill="#b2ff00"/><rect x="402.1" y="361.6" width="37.6667" height="7.7" fill="#ffff00"/><rect x="439.567" y="361.6" width="37.6667" height="7.7" fill="#ffb200"/><rect x="477.033" y="361.6" width="37.6667" height="7.7" fill="#ff0000"/><rect x="177.0" y="361.3" width="337.8" height="8.3" fill="none" stroke="#b8b8b8" stroke-width=".6"/><path d="M177.3 369.3V371.3" stroke="#b8b8b8" stroke-width=".5"/><text x="177.5" y="377.2" font-size="8.15" fill="#d6d6d6" xml:space="preserve">4.15343</text><path d="M214.767 369.3V371.3" stroke="#b8b8b8" stroke-width=".5"/><text x="214.967" y="384.7" font-size="8.15" fill="#d6d6d6" xml:space="preserve">17.8397</text><path d="M252.233 369.3V371.3" stroke="#b8b8b8" stroke-width=".5"/><text x="252.433" y="377.2" font-size="8.15" fill="#d6d6d6" xml:space="preserve">31.5259</text><path d="M289.7 369.3V371.3" stroke="#b8b8b8" stroke-width=".5"/><text x="289.9" y="384.7" font-size="8.15" fill="#d6d6d6" xml:space="preserve">45.2121</text><path d="M327.167 369.3V371.3" stroke="#b8b8b8" stroke-width=".5"/><text x="327.367" y="377.2" font-size="8.15" fill="#d6d6d6" xml:space="preserve">58.8983</text><path d="M364.633 369.3V371.3" stroke="#b8b8b8" stroke-width=".5"/><text x="364.833" y="384.7" font-size="8.15" fill="#d6d6d6" xml:space="preserve">72.5846</text><path d="M402.1 369.3V371.3" stroke="#b8b8b8" stroke-width=".5"/><text x="402.3" y="377.2" font-size="8.15" fill="#d6d6d6" xml:space="preserve">86.2708</text><path d="M439.567 369.3V371.3" stroke="#b8b8b8" stroke-width=".5"/><text x="439.767" y="384.7" font-size="8.15" fill="#d6d6d6" xml:space="preserve">99.957</text><path d="M477.033 369.3V371.3" stroke="#b8b8b8" stroke-width=".5"/><text x="477.233" y="377.2" font-size="8.15" fill="#d6d6d6" xml:space="preserve">113.643</text><path d="M514.5 369.3V371.3" stroke="#b8b8b8" stroke-width=".5"/><text x="514.7" y="384.7" font-size="8.15" fill="#d6d6d6" xml:space="preserve">127.329</text></g><g font-family="Liberation Sans, sans-serif"><text x="551.6" y="87.2" font-size="10.8" font-weight="bold" fill="#f2f2f2" text-anchor="end" textLength="31.6" lengthAdjust="spacingAndGlyphs">ANSYS</text><text x="551.6" y="94.2" font-size="6.9" font-weight="bold" fill="#bdbdbd" text-anchor="end" textLength="16.6" lengthAdjust="spacingAndGlyphs">R18.2</text><path d="M520.5 97.7H551.2M520.5 104.9H551.2" stroke="#8a5a9a" stroke-width=".8"/><path d="M524 97.7H548M524 104.9H548" stroke="#e8e0ee" stroke-width=".6"/><text x="535.8" y="103.3" font-size="6.3" fill="#e0e0e0" text-anchor="middle" textLength="24" lengthAdjust="spacingAndGlyphs">Academic</text></g><polygon points="294.8,321 295.6,321 298.3,336.8 294.6,336.8" fill="#b4e000"/><path d="M298.4 337H311" stroke="#8a8a8a" stroke-width=".9"/><rect x="294.6" y="334" width="1.6" height="2.8" fill="#1060c0"/><g font-family="Liberation Mono, monospace"><text x="295" y="318.9" font-size="7.2" fill="#a6c400" xml:space="preserve">Y</text><text x="296" y="334.6" font-size="6.6" fill="#1090c8" xml:space="preserve">Z</text><text x="310.6" y="334.5" font-size="7.2" fill="#c4c4c4" xml:space="preserve">X</text></g></svg>
<div style="left:1284.2px;top:137px;width:1.4px;height:665px;background:#b9b9b9"></div>
<div style="left:1316px;top:138px;width:1px;height:663px;background:#e0e0e0"></div>
<div style="left:1322.8px;top:138px;width:1px;height:664px;background:#fbfbfb"></div>
<div style="left:1288.6px;top:143.2px;width:23px;height:16.8px;background:#fff;border:1px solid;border-color:#8a8a8a #e8e8e8 #e8e8e8 #8a8a8a"></div>
<div class="t" style="left:1292.4px;top:145.6px;font-size:12px;color:#111">1</div>
<div class="tb" style="left:1301px;top:144.6px;width:9.4px;height:14px;"></div>
<svg style="left:1303.2px;top:149.8px" width="5.2" height="3.6" viewBox="0 0 6 4"><path d="M0 0H6L3 4Z" fill="#111"/></svg>
<div class="tb" style="left:1289.6px;top:166.1px;width:24px;height:16.8px;"></div>
<svg style="left:1293.4px;top:166.4px" width="16.4" height="16.4" viewBox="0 0 16 16"><path d="M8 1.6L13.8 4.8V11.2L8 14.4L2.2 11.2V4.8Z" fill="#08c4d4" stroke="#0a5a66" stroke-width=".9"/><path d="M2.2 4.8L8 8L13.8 4.8M8 8V14.4" stroke="#0a5a66" stroke-width=".8" fill="none"/></svg>
<div class="tb" style="left:1289.6px;top:187.5px;width:24px;height:16.8px;"></div>
<svg style="left:1293.4px;top:187.8px" width="16.4" height="16.4" viewBox="0 0 16 16"><path d="M4 4.2L9.5 2L13 3.6L12 12L6.4 14.2L3.4 12.4Z" fill="#08c4d4" stroke="#0a5a66" stroke-width=".9"/><path d="M4 4.2L7 5.8L13 3.6M7 5.8L6.4 14.2" stroke="#0a5a66" stroke-width=".8" fill="none"/></svg>
<div class="tb" style="left:1289.6px;top:208.9px;width:24px;height:16.8px;"></div>
<svg style="left:1293.4px;top:209.2px" width="16.4" height="16.4" viewBox="0 0 16 16"><path d="M3 6.5L6.5 3H13.5L10 6.5Z" fill="#f6f6f6" stroke="#2a2a2a" stroke-width=".9"/><path d="M10 6.5L13.5 3V10L10 13.5Z" fill="#e4e4e4" stroke="#2a2a2a" stroke-width=".9"/><rect x="3" y="6.5" width="7" height="7" fill="#08c4d4" stroke="#2a2a2a" stroke-width=".9"/></svg>
<div class="tb" style="left:1289.6px;top:230.3px;width:24px;height:16.8px;"></div>
<svg style="left:1293.4px;top:230.6px" width="16.4" height="16.4" viewBox="0 0 16 16"><path d="M3 6.5L6.5 3H13.5L10 6.5Z" fill="#f6f6f6" stroke="#2a2a2a" stroke-width=".9"/><path d="M10 6.5L13.5 3V10L10 13.5Z" fill="#08c4d4" stroke="#2a2a2a" stroke-width=".9"/><rect x="3" y="6.5" width="7" height="7" fill="#f6f6f6" stroke="#2a2a2a" stroke-width=".9"/></svg>
<div class="tb" style="left:1289.6px;top:251.7px;width:24px;height:16.8px;"></div>
<svg style="left:1293.4px;top:252px" width="16.4" height="16.4" viewBox="0 0 16 16"><path d="M3 6.5L6.5 3H13.5L10 6.5Z" fill="#08c4d4" stroke="#2a2a2a" stroke-width=".9"/><path d="M10 6.5L13.5 3V10L10 13.5Z" fill="#e4e4e4" stroke="#2a2a2a" stroke-width=".9"/><rect x="3" y="6.5" width="7" height="7" fill="#f6f6f6" stroke="#2a2a2a" stroke-width=".9"/></svg>
<div class="tb" style="left:1289.6px;top:273.1px;width:24px;height:16.8px;"></div>
<svg style="left:1293.4px;top:273.4px" width="16.4" height="16.4" viewBox="0 0 16 16"><path d="M3 6.5L6.5 3H13.5L10 6.5Z" fill="#08c4d4" stroke="#2a2a2a" stroke-width=".9"/><path d="M10 6.5L13.5 3V10L10 13.5Z" fill="#08c4d4" stroke="#2a2a2a" stroke-width=".9"/><rect x="3" y="6.5" width="7" height="7" fill="#f6f6f6" stroke="#2a2a2a" stroke-width=".9"/><circle cx="11.6" cy="5" r="1.3" fill="#0a4a52"/></svg>
<div class="tb" style="left:1289.6px;top:294.5px;width:24px;height:16.8px;"></div>
<svg style="left:1293.4px;top:294.8px" width="16.4" height="16.4" viewBox="0 0 16 16"><path d="M3 6.5L6.5 3H13.5L10 6.5Z" fill="#e8e8e8" stroke="#2a2a2a" stroke-width=".9"/><path d="M10 6.5L13.5 3V10L10 13.5Z" fill="#e4e4e4" stroke="#2a2a2a" stroke-width=".9"/><rect x="3" y="6.5" width="7" height="7" fill="#08c4d4" stroke="#2a2a2a" stroke-width=".9"/></svg>
<div class="tb" style="left:1289.6px;top:315.9px;width:24px;height:16.8px;"></div>
<svg style="left:1293.4px;top:316.2px" width="16.4" height="16.4" viewBox="0 0 16 16"><path d="M3 6.5L6.5 3H13.5L10 6.5Z" fill="#f6f6f6" stroke="#2a2a2a" stroke-width=".9"/><path d="M10 6.5L13.5 3V10L10 13.5Z" fill="#e4e4e4" stroke="#2a2a2a" stroke-width=".9"/><rect x="3" y="6.5" width="7" height="7" fill="#f6f6f6" stroke="#2a2a2a" stroke-width=".9"/><path d="M3 13.5H10L13.5 10" stroke="#08c4d4" stroke-width="1.6" fill="none"/></svg>
<div class="tb" style="left:1289.6px;top:337.3px;width:24px;height:16.8px;"></div>
<svg style="left:1293.4px;top:337.6px" width="16.4" height="16.4" viewBox="0 0 16 16"><path d="M10.2 9.8L14 13.6" stroke="#7a5c08" stroke-width="2.4" stroke-linecap="round"/><circle cx="7" cy="6.6" r="4.6" fill="#c4f0fc" stroke="#3a4a52" stroke-width="1"/><rect x="4.8" y="4.4" width="4.4" height="4.4" fill="#0a8a94"/></svg>
<div class="tb" style="left:1289.6px;top:358.7px;width:24px;height:16.8px;"></div>
<svg style="left:1293.4px;top:359px" width="16.4" height="16.4" viewBox="0 0 16 16"><path d="M10.2 9.8L14 13.6" stroke="#7a5c08" stroke-width="2.4" stroke-linecap="round"/><circle cx="7" cy="6.6" r="4.6" fill="#c4f0fc" stroke="#3a4a52" stroke-width="1"/></svg>
<div class="tb" style="left:1289.6px;top:380.1px;width:24px;height:16.8px;"></div>
<svg style="left:1293.4px;top:380.4px" width="16.4" height="16.4" viewBox="0 0 16 16"><path d="M10.2 9.8L14 13.6" stroke="#7a5c08" stroke-width="2.4" stroke-linecap="round"/><circle cx="7" cy="6.6" r="4.6" fill="#c4f0fc" stroke="#3a4a52" stroke-width="1"/><path d="M3 3.4L8.6 7.6" stroke="#3a40e0" stroke-width="2.2"/><circle cx="4.2" cy="4.4" r="2" fill="#5a60e8"/></svg>
<div class="tb" style="left:1289.6px;top:401.5px;width:24px;height:16.8px;"></div>
<svg style="left:1293.4px;top:401.8px" width="16.4" height="16.4" viewBox="0 0 16 16"><path d="M10.2 9.8L14 13.6" stroke="#7a5c08" stroke-width="2.4" stroke-linecap="round"/><circle cx="7" cy="6.6" r="4.6" fill="#c4f0fc" stroke="#3a4a52" stroke-width="1"/><circle cx="7" cy="6.6" r="2.4" fill="#3a50e0"/></svg>
<div class="tb" style="left:1289.6px;top:422.9px;width:24px;height:16.8px;"></div>
<svg style="left:1293.4px;top:423.2px" width="16.4" height="16.4" viewBox="0 0 16 16"><path d="M10.2 9.8L14 13.6" stroke="#7a5c08" stroke-width="2.4" stroke-linecap="round"/><circle cx="7" cy="6.6" r="4.6" fill="#c4f0fc" stroke="#3a4a52" stroke-width="1"/><rect x="4.4" y="5.4" width="5.2" height="2.4" fill="#3a50e0"/></svg>
<div class="tb" style="left:1289.6px;top:444.3px;width:24px;height:16.8px;"></div>
<svg style="left:1293.4px;top:444.6px" width="16.4" height="16.4" viewBox="0 0 16 16"><path d="M2.4 8L7 4.6V11.4Z" fill="#111"/><circle cx="10.4" cy="8" r="2.7" fill="#0a8a8a"/></svg>
<div class="tb" style="left:1289.6px;top:465.7px;width:24px;height:16.8px;"></div>
<svg style="left:1293.4px;top:466px" width="16.4" height="16.4" viewBox="0 0 16 16"><circle cx="5.6" cy="8" r="2.7" fill="#0a8a8a"/><path d="M13.6 8L9 4.6V11.4Z" fill="#111"/></svg>
<div class="tb" style="left:1289.6px;top:487.1px;width:24px;height:16.8px;"></div>
<svg style="left:1293.4px;top:487.4px" width="16.4" height="16.4" viewBox="0 0 16 16"><path d="M8 1.6L11.4 6.2H4.6Z" fill="#111"/><circle cx="8" cy="10.4" r="2.7" fill="#0a8a8a"/><path d="M5 7.2H11" stroke="#111" stroke-width=".8"/></svg>
<div class="tb" style="left:1289.6px;top:508.5px;width:24px;height:16.8px;"></div>
<svg style="left:1293.4px;top:508.8px" width="16.4" height="16.4" viewBox="0 0 16 16"><circle cx="8" cy="5.6" r="2.7" fill="#0a8a8a"/><path d="M8 14.4L11.4 9.8H4.6Z" fill="#111"/><path d="M5 8.8H11" stroke="#111" stroke-width=".8"/></svg>
<div class="tb" style="left:1289.6px;top:529.9px;width:24px;height:16.8px;"></div>
<svg style="left:1293.4px;top:530.2px" width="16.4" height="16.4" viewBox="0 0 16 16"><circle cx="7.4" cy="9.2" r="4.1" fill="#fafafa" stroke="#3a3a3a" stroke-width="1"/><path d="M3.4 6.4A5.6 5.6 0 0 1 11.4 4.8" fill="none" stroke="#222" stroke-width="1.2"/><path d="M10 2.6L14.8 7.2L9.8 7.8Z" fill="#111"/><path d="M5.7 7.4L9.1 11M9.1 7.4L5.7 11" stroke="#222" stroke-width="1.1"/></svg>
<div class="tb" style="left:1289.6px;top:551.3px;width:24px;height:16.8px;"></div>
<svg style="left:1293.4px;top:551.6px" width="16.4" height="16.4" viewBox="0 0 16 16"><circle cx="7.4" cy="9.2" r="4.1" fill="#fafafa" stroke="#3a3a3a" stroke-width="1"/><g transform="translate(14.8 0) scale(-1 1)"><path d="M3.4 6.4A5.6 5.6 0 0 1 11.4 4.8" fill="none" stroke="#222" stroke-width="1.2"/><path d="M10 2.6L14.8 7.2L9.8 7.8Z" fill="#111"/></g><path d="M5.7 7.4L9.1 11M9.1 7.4L5.7 11" stroke="#222" stroke-width="1.1"/></svg>
<div class="tb" style="left:1289.6px;top:572.7px;width:24px;height:16.8px;"></div>
<svg style="left:1293.4px;top:573px" width="16.4" height="16.4" viewBox="0 0 16 16"><circle cx="7.4" cy="9.2" r="4.1" fill="#fafafa" stroke="#3a3a3a" stroke-width="1"/><path d="M3.4 6.4A5.6 5.6 0 0 1 11.4 4.8" fill="none" stroke="#222" stroke-width="1.2"/><path d="M10 2.6L14.8 7.2L9.8 7.8Z" fill="#111"/><path d="M5.7 7.2L7.4 9.3L9.1 7.2M7.4 9.3V11.4" stroke="#222" stroke-width="1.1" fill="none"/></svg>
<div class="tb" style="left:1289.6px;top:594.1px;width:24px;height:16.8px;"></div>
<svg style="left:1293.4px;top:594.4px" width="16.4" height="16.4" viewBox="0 0 16 16"><circle cx="7.4" cy="9.2" r="4.1" fill="#fafafa" stroke="#3a3a3a" stroke-width="1"/><g transform="translate(14.8 0) scale(-1 1)"><path d="M3.4 6.4A5.6 5.6 0 0 1 11.4 4.8" fill="none" stroke="#222" stroke-width="1.2"/><path d="M10 2.6L14.8 7.2L9.8 7.8Z" fill="#111"/></g><path d="M5.7 7.2L7.4 9.3L9.1 7.2M7.4 9.3V11.4" stroke="#222" stroke-width="1.1" fill="none"/></svg>
<div class="tb" style="left:1289.6px;top:615.5px;width:24px;height:16.8px;"></div>
<svg style="left:1293.4px;top:615.8px" width="16.4" height="16.4" viewBox="0 0 16 16"><circle cx="7.4" cy="9.2" r="4.1" fill="#fafafa" stroke="#3a3a3a" stroke-width="1"/><path d="M3.4 6.4A5.6 5.6 0 0 1 11.4 4.8" fill="none" stroke="#222" stroke-width="1.2"/><path d="M10 2.6L14.8 7.2L9.8 7.8Z" fill="#111"/><path d="M5.7 7.4H9.1L5.7 11H9.1" stroke="#222" stroke-width="1.1" fill="none"/></svg>
<div class="tb" style="left:1289.6px;top:636.9px;width:24px;height:16.8px;"></div>
<svg style="left:1293.4px;top:637.2px" width="16.4" height="16.4" viewBox="0 0 16 16"><circle cx="7.4" cy="9.2" r="4.1" fill="#fafafa" stroke="#3a3a3a" stroke-width="1"/><g transform="translate(14.8 0) scale(-1 1)"><path d="M3.4 6.4A5.6 5.6 0 0 1 11.4 4.8" fill="none" stroke="#222" stroke-width="1.2"/><path d="M10 2.6L14.8 7.2L9.8 7.8Z" fill="#111"/></g><path d="M5.7 7.4H9.1L5.7 11H9.1" stroke="#222" stroke-width="1.1" fill="none"/></svg>
<div style="left:1288.6px;top:658.8px;width:23px;height:16.8px;background:#fff;border:1px solid;border-color:#8a8a8a #e8e8e8 #e8e8e8 #8a8a8a"></div>
<div class="t" style="left:1292.4px;top:661.2px;font-size:12px;color:#111">3</div>
<div class="tb" style="left:1301px;top:660.2px;width:9.4px;height:14px;"></div>
<svg style="left:1303.2px;top:665.4px" width="5.2" height="3.6" viewBox="0 0 6 4"><path d="M0 0H6L3 4Z" fill="#111"/></svg>
<div class="tb" style="left:1289.6px;top:680.4px;width:24px;height:16.8px;"></div>
<svg style="left:1293.4px;top:680.7px" width="16.4" height="16.4" viewBox="0 0 16 16"><circle cx="4.4" cy="4.6" r="2.3" fill="#0a8a8a"/><rect x="7" y="6.4" width="6.6" height="7.2" fill="#f4f4f4" stroke="#222" stroke-width="1"/><path d="M7 9H13.6M9 9V13.6" stroke="#222" stroke-width="1"/></svg>
<div style="left:0px;top:825.6px;width:1332px;height:6.4px;background:linear-gradient(#dfe9f4 0,#fff 2px)"></div>
<div style="left:1330.4px;top:0px;width:3.6px;height:832px;background:#fff"></div>
</div></body></html>
